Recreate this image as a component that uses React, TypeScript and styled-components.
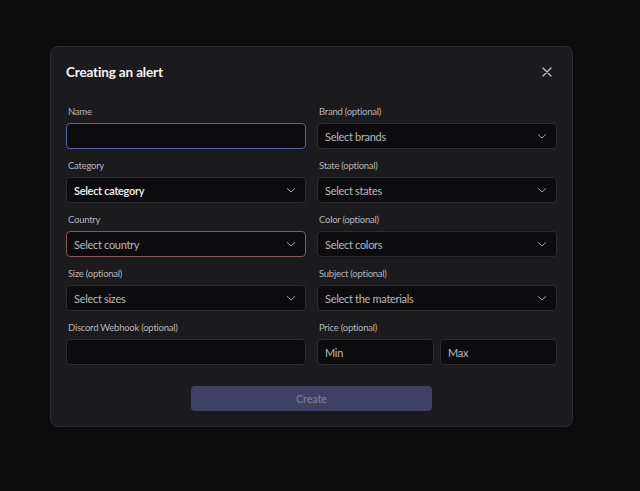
import React from 'react'
import styled, { createGlobalStyle } from 'styled-components'

const GlobalStyle = createGlobalStyle`
  html, body {
    margin: 0;
    padding: 0;
    background: #0c0c0d;
  }
  body {
    font-family: Lato, 'Noto Sans', sans-serif;
    color: #e8e8ea;
  }
  * {
    box-sizing: border-box;
  }
`

const Page = styled.div`
  width: 640px;
  height: 491px;
  padding: 46px 0 0 50px;
`

const Modal = styled.div`
  width: 523px;
  height: 381px;
  background: #1b1b1d;
  border: 1px solid #2b2b2e;
  border-radius: 8px;
  padding: 15px;
  display: flex;
  flex-direction: column;
`

const Header = styled.div`
  display: flex;
  align-items: center;
  justify-content: space-between;
  height: 20px;
`

const Title = styled.h2`
  margin: 0;
  font-size: 13.5px;
  font-weight: 700;
  color: #f4f4f5;
  letter-spacing: -0.15px;
`

const CloseButton = styled.button`
  background: none;
  border: none;
  padding: 0;
  width: 12px;
  height: 12px;
  margin-right: 4px;
  display: flex;
  cursor: pointer;
  color: #c8c8cc;
`

const Grid = styled.div`
  display: grid;
  grid-template-columns: 240px 240px;
  column-gap: 11px;
  row-gap: 10px;
  margin-top: 23px;
`

const Field = styled.div`
  display: flex;
  flex-direction: column;
  gap: 4px;
`

const Label = styled.label`
  font-size: 9.5px;
  line-height: 14px;
  color: #b4b4b8;
  padding-left: 2px;
  letter-spacing: -0.25px;
`

const Box = styled.div<{ $accent?: string }>`
  height: 26px;
  background: #0c0c0e;
  border: 1px solid ${p => p.$accent || '#2d2d31'};
  border-radius: 4px;
  display: flex;
  align-items: center;
  justify-content: space-between;
  padding: 0 8px 0 7px;
`

const Placeholder = styled.span<{ $strong?: boolean }>`
  font-size: 11px;
  letter-spacing: -0.3px;
  color: ${p => (p.$strong ? '#f4f4f5' : '#b9b9bd')};
  font-weight: ${p => (p.$strong ? 600 : 400)};
`

const PriceRow = styled.div`
  display: grid;
  grid-template-columns: 1fr 1fr;
  gap: 6px;
`

const Footer = styled.div`
  display: flex;
  justify-content: center;
  margin-top: 21px;
`

const CreateButton = styled.button`
  width: 241px;
  height: 25px;
  border: none;
  border-radius: 4px;
  background: #3e4165;
  color: #7c7c86;
  font-family: inherit;
  font-size: 10.5px;
  font-weight: 600;
`

function Chevron () {
  return (
    <svg width='12' height='12' viewBox='0 0 24 24' fill='none' stroke='#bdbdc2' strokeWidth='1.7' strokeLinecap='round' strokeLinejoin='round'>
      <path d='m4.5 9 7.5 7 7.5-7' />
    </svg>
  )
}

interface SelectProps {
  label: string
  placeholder: string
  strong?: boolean
  accent?: string
}

function SelectField ({ label, placeholder, strong, accent }: SelectProps) {
  return (
    <Field>
      <Label>{label}</Label>
      <Box $accent={accent}>
        <Placeholder $strong={strong}>{placeholder}</Placeholder>
        <Chevron />
      </Box>
    </Field>
  )
}

export default function App () {
  return (
    <>
      <GlobalStyle />
      <Page>
        <Modal>
          <Header>
            <Title>Creating an alert</Title>
            <CloseButton aria-label='Close'>
              <svg width='12' height='12' viewBox='0 0 12 12' stroke='currentColor' strokeWidth='1.2' strokeLinecap='round'>
                <path d='M2 2l8 8M10 2l-8 8' />
              </svg>
            </CloseButton>
          </Header>
          <Grid>
            <Field>
              <Label>Name</Label>
              <Box $accent='#5a5ea8' />
            </Field>
            <SelectField label='Brand (optional)' placeholder='Select brands' />
            <SelectField label='Category' placeholder='Select category' strong />
            <SelectField label='State (optional)' placeholder='Select states' />
            <SelectField label='Country' placeholder='Select country' accent='#86595b' />
            <SelectField label='Color (optional)' placeholder='Select colors' />
            <SelectField label='Size (optional)' placeholder='Select sizes' />
            <SelectField label='Subject (optional)' placeholder='Select the materials' />
            <Field>
              <Label>Discord Webhook (optional)</Label>
              <Box />
            </Field>
            <Field>
              <Label>Price (optional)</Label>
              <PriceRow>
                <Box><Placeholder>Min</Placeholder></Box>
                <Box><Placeholder>Max</Placeholder></Box>
              </PriceRow>
            </Field>
          </Grid>
          <Footer>
            <CreateButton>Create</CreateButton>
          </Footer>
        </Modal>
      </Page>
    </>
  )
}
